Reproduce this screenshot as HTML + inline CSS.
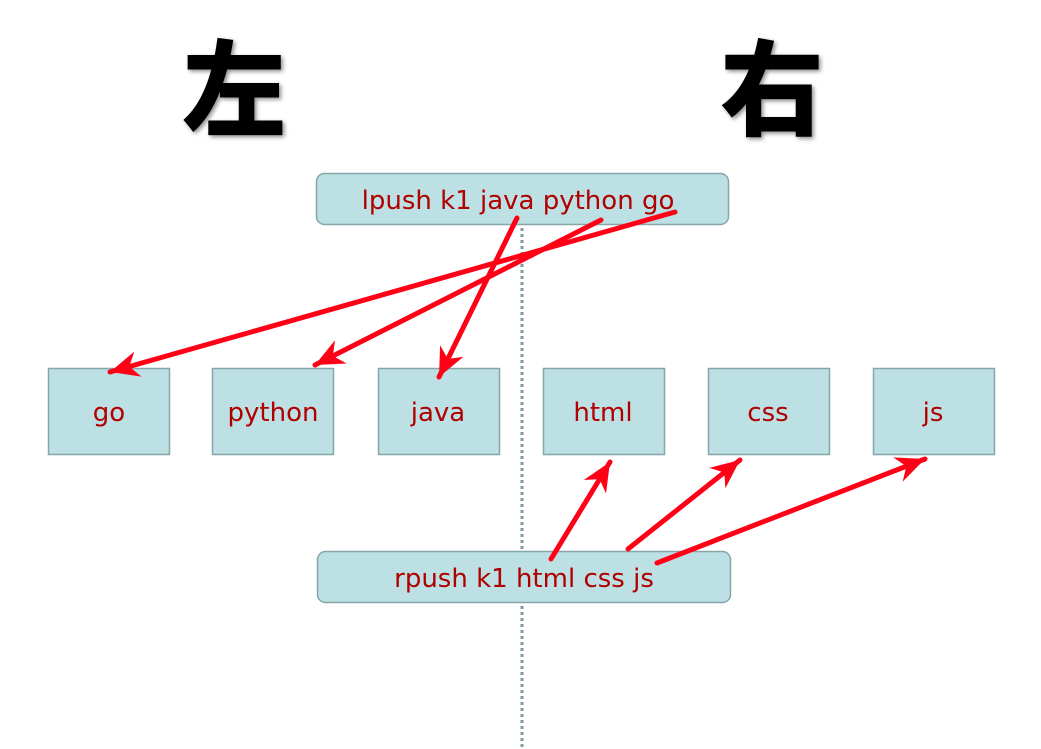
<!DOCTYPE html>
<html><head><meta charset="utf-8"><style>
html,body{margin:0;padding:0;background:#fff;}
svg{display:block;}
</style></head><body>
<svg width="1041" height="749" xmlns="http://www.w3.org/2000/svg">
<defs>
<filter id="sh" x="-10%" y="-10%" width="130%" height="130%"><feDropShadow dx="2" dy="2" stdDeviation="2" flood-color="#000" flood-opacity="0.45"/></filter>
<marker id="ah" markerUnits="userSpaceOnUse" markerWidth="34" markerHeight="30" viewBox="-32 -15 34 30" refX="0" refY="0" orient="auto">
<path d="M0,0 L-29,-13 L-20,0 L-29,13 Z" fill="#ff0016"/>
</marker>
</defs>
<text x="234" y="127" font-family="Noto Sans CJK SC, sans-serif" font-weight="900" font-size="104" text-anchor="middle" fill="#000" filter="url(#sh)">左</text>
<text x="772" y="127" font-family="Noto Sans CJK SC, sans-serif" font-weight="900" font-size="104" text-anchor="middle" fill="#000" filter="url(#sh)">右</text>
<line x1="522" y1="228" x2="522" y2="749" stroke="#7f9aa0" stroke-width="3" stroke-dasharray="3,3"/>
<g fill="#bce0e3" stroke="#86a6a8" stroke-width="1.5">
<rect x="316.5" y="173.5" width="412" height="51" rx="8"/>
<rect x="317.5" y="551.5" width="413" height="51" rx="8"/>
<rect x="48.5" y="368.5" width="121" height="86"/>
<rect x="212.5" y="368.5" width="121" height="86"/>
<rect x="378.5" y="368.5" width="121" height="86"/>
<rect x="543.5" y="368.5" width="121" height="86"/>
<rect x="708.5" y="368.5" width="121" height="86"/>
<rect x="873.5" y="368.5" width="121" height="86"/>
</g>
<g font-family="DejaVu Sans, Liberation Sans, sans-serif" font-size="26" fill="#b00000" text-anchor="middle">
<text x="518" y="209">lpush k1 java python go</text>
<text x="524" y="587">rpush k1 html css js</text>
<text x="109" y="421">go</text>
<text x="273" y="421">python</text>
<text x="438" y="421">java</text>
<text x="603" y="421">html</text>
<text x="768" y="421">css</text>
<text x="933" y="421">js</text>
</g>
<g stroke="#ff0016" stroke-width="5" stroke-linecap="round" fill="none" marker-end="url(#ah)">
<line x1="675" y1="212" x2="110" y2="372"/>
<line x1="601" y1="220" x2="315" y2="365"/>
<line x1="517" y1="218" x2="439" y2="377"/>
<line x1="551" y1="559" x2="610" y2="462"/>
<line x1="628" y1="549" x2="740" y2="460"/>
<line x1="657" y1="563" x2="925" y2="459"/>
</g>
</svg>
</body></html>
